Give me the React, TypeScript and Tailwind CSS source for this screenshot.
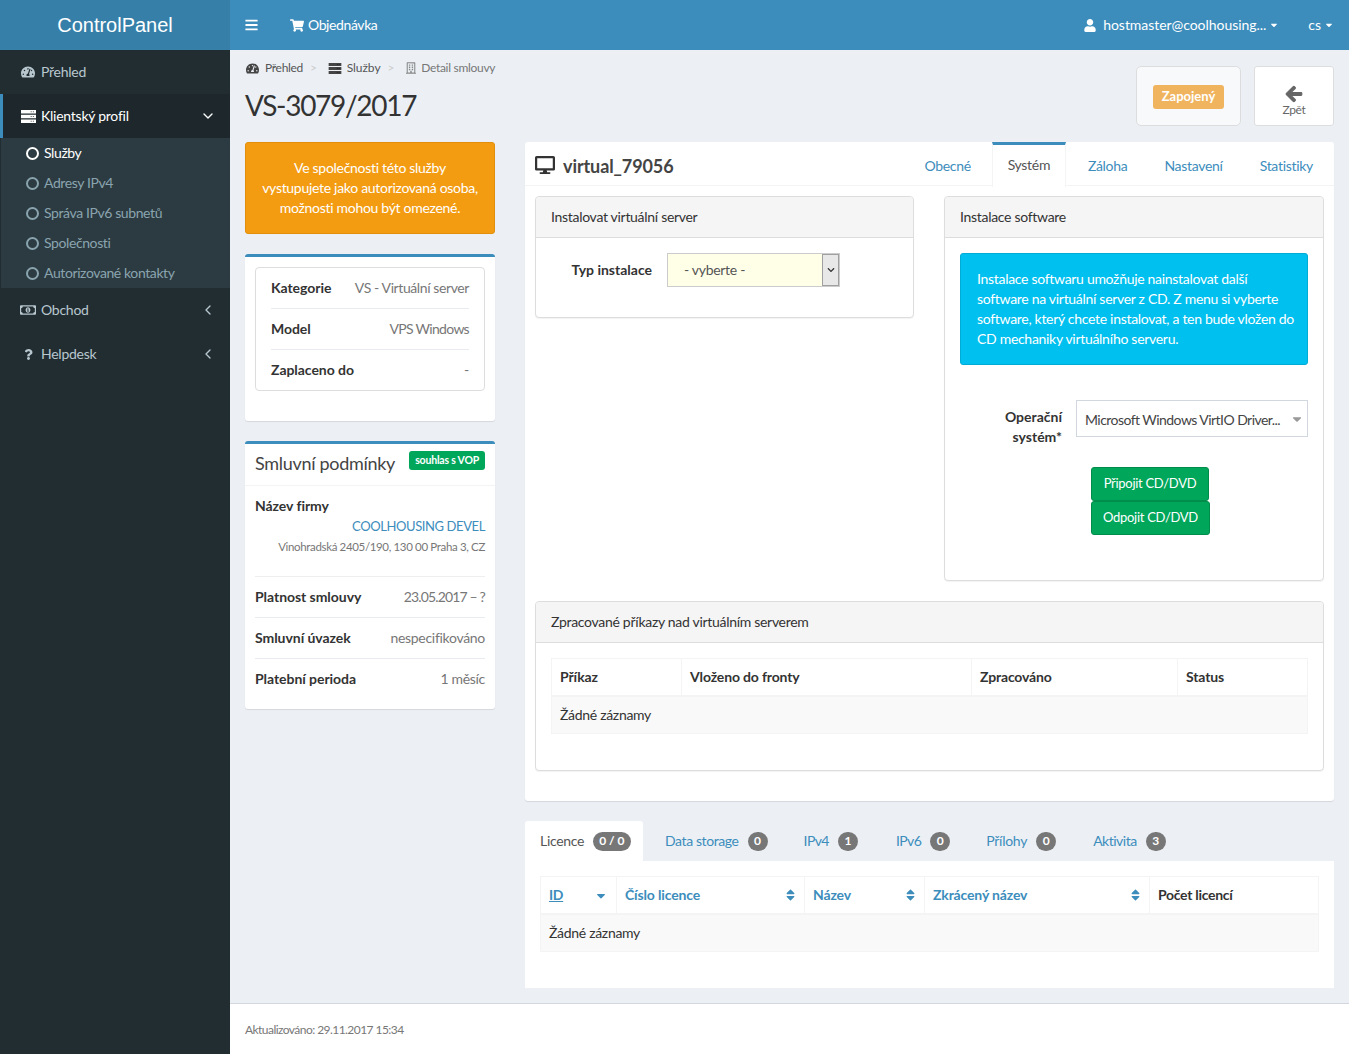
import React from "react";
import { ChevronDown, ChevronLeft } from "lucide-react";
import {
  FaTachometerAlt, FaBars, FaShoppingCart, FaUser, FaRegMoneyBillAlt, FaQuestion, FaRegBuilding, FaArrowLeft, FaDesktop, FaSort, FaSortDown, FaCaretDown, FaChevronDown,
} from "react-icons/fa";

const ServerIcon = ({ className }: { className?: string }) => (
  <svg viewBox="0 0 15 13" className={className} fill="currentColor">
    <path d="M0 0h15v3.4H0zM0 4.8h15v3.4H0zM0 9.6h15V13H0z" />
    <path d="M9.6 1.2h1.2v1H9.6zM11.8 1.2h1.2v1h-1.2zM9.6 6h1.2v1H9.6zM11.8 6h1.2v1h-1.2zM9.6 10.8h1.2v1H9.6zM11.8 10.8h1.2v1h-1.2z" fill="#000" fillOpacity="0.55" />
  </svg>
);

const Sub = ({ label, active }: { label: string; active?: boolean }) => (
  <div className={`h-[30px] flex items-center pl-[25px] gap-[5px] ${active ? "text-white" : "text-[#8aa4af]"}`}>
    <span className="w-[13px] h-[13px] shrink-0 rounded-full border-2 border-current" />
    <span className="text-[14px] tracking-[-0.4px] pb-[2px]">{label}</span>
  </div>
);

const SideItem = ({ icon, label, chevron }: { icon: React.ReactNode; label: string; chevron?: boolean }) => (
  <div className="h-[44px] flex items-center pl-[20px] pr-[14px] text-[#b8c7ce]">
    <span className="w-[16px] flex justify-center mr-[5px]">{icon}</span>
    <span className="text-[14px] tracking-[-0.25px] flex-1 pb-[2px]">{label}</span>
    {chevron && <ChevronLeft size={16} />}
  </div>
);

const Row = ({ k, v, border, vClass }: { k: string; v: string; border?: boolean; vClass?: string }) => (
  <div className={`flex items-center justify-between pb-[2px] ${border ? "h-[41px] border-t border-[#e8ebef]" : "h-[40px]"}`}>
    <span className="font-bold text-[#333] tracking-[-0.05px]">{k}</span>
    <span className={`text-[#777] ${vClass ?? ""}`}>{v}</span>
  </div>
);

const Panel = ({ title, children, className }: { title: string; children: React.ReactNode; className?: string }) => (
  <div className={`border border-[#dddddd] rounded-[4px] bg-white shadow-[0_1px_1px_rgba(0,0,0,0.05)] ${className ?? ""}`}>
    <div className="h-[41px] bg-[#f5f5f5] border-b border-[#dddddd] rounded-t-[4px] flex items-center pl-[15px] pb-[2px] text-[#333]">{title}</div>
    {children}
  </div>
);

const Badge = ({ children }: { children: React.ReactNode }) => (
  <span className="ml-[9px] inline-flex items-center justify-center min-w-[20px] h-[19px] px-[6px] rounded-full bg-[#777] text-white text-[12px] font-bold tracking-normal">{children}</span>
);

const THead = ({ label, last, sort }: { label: string; last?: boolean; sort?: React.ReactNode }) => (
  <th className={`h-[37px] px-[8px] text-left font-bold tracking-[-0.15px] border-b-2 border-[#f4f4f4] ${last ? "" : "border-r border-r-[#f4f4f4]"}`}>
    <div className="flex items-center justify-between">
      <span>{label}</span>
      {sort}
    </div>
  </th>
);

export default function App() {
  return (
    <div className="flex min-h-[1054px] bg-[#ecf0f5] text-[14px] text-[#333] tracking-[-0.3px] font-['Lato',sans-serif]">
      {/* sidebar */}
      <aside className="w-[230px] shrink-0 bg-[#222d32] flex flex-col">
        <div className="h-[50px] bg-[#367fa9] flex items-center justify-center text-white text-[20px] tracking-normal font-['Liberation_Sans',sans-serif]">ControlPanel</div>
        <SideItem icon={<FaTachometerAlt className="w-[14px] h-[14px]" />} label="Přehled" />
        <div className="h-[44px] flex items-center bg-[#1e282c] border-l-[3px] border-[#3c8dbc] pl-[18px] pr-[14px] text-white">
          <ServerIcon className="w-[15px] h-[13px] mr-[5px]" />
          <span className="text-[14px] tracking-[-0.25px] flex-1 pb-[2px]">Klientský profil</span>
          <ChevronDown size={16} />
        </div>
        <div className="bg-[#2c3b41] ml-px">
          <Sub label="Služby" active />
          <Sub label="Adresy IPv4" />
          <Sub label="Správa IPv6 subnetů" />
          <Sub label="Společnosti" />
          <Sub label="Autorizované kontakty" />
        </div>
        <SideItem icon={<FaRegMoneyBillAlt className="w-[16px] h-[16px]" />} label="Obchod" chevron />
        <SideItem icon={<FaQuestion className="w-[11px] h-[11px]" />} label="Helpdesk" chevron />
      </aside>

      {/* main */}
      <div className="flex-1 min-w-0 flex flex-col">
        <header className="h-[50px] bg-[#3c8dbc] text-white flex items-center pl-[15px] pr-[15px]">
          <FaBars className="w-[13px] h-[14px] mr-[32px]" />
          <FaShoppingCart className="w-[14px] h-[13px] mr-[4px]" />
          <span className="flex-1 tracking-[-0.4px] pb-px">Objednávka</span>
          <FaUser className="w-[12px] h-[13px] mr-[7px]" />
          <span className="tracking-[-0.05px] pb-px">hostmaster@coolhousing...</span>
          <FaCaretDown className="w-[10px] h-[10px] ml-[3px] mr-[29px]" />
          <span className="tracking-normal pb-px">cs</span>
          <FaCaretDown className="w-[10px] h-[10px] ml-[3px]" />
        </header>

        <main className="flex-1 px-[15px] pt-[10px]">
          {/* page head */}
          <div className="flex justify-between h-[82px]">
            <div>
              <div className="h-[16px] flex items-center text-[12px] text-[#666]">
                <FaTachometerAlt className="w-[13px] h-[13px] text-[#444] ml-px mr-[6px]" />
                <span className="text-[#555]">Přehled</span>
                <span className="text-[#ccc] ml-[7px] mr-[11px]">&gt;</span>
                <ServerIcon className="w-[14px] h-[11px] text-[#444] mr-[5px]" />
                <span className="text-[#555] tracking-[-0.05px]">Služby</span>
                <span className="text-[#ccc] ml-[7px] mr-[12px]">&gt;</span>
                <FaRegBuilding className="w-[10px] h-[12px] text-[#888] mr-[5px]" />
                <span className="text-[#777]">Detail smlouvy</span>
              </div>
              <h1 className="text-[28px] leading-[36px] mt-[11px] text-[#333] tracking-[-1.3px]">VS-3079/2017</h1>
            </div>
            <div className="flex gap-[13px] mt-[6px] h-[60px]">
              <div className="w-[105px] bg-[#f8f9fb] border border-[#dddddd] rounded-[5px] flex items-center justify-center">
                <span className="bg-[#f0ad4e] opacity-90 text-white font-bold text-[13px] tracking-normal h-[24px] w-[71px] mt-[2px] rounded-[3px] flex items-center justify-center">Zapojený</span>
              </div>
              <div className="w-[80px] bg-white border border-[#dddddd] rounded-[3px] flex flex-col items-center justify-center text-[#666]">
                <FaArrowLeft className="w-[18px] h-[18px] text-[#666] mt-[8px]" stroke="currentColor" strokeWidth={30} />
                <span className="text-[12px] leading-[13px]">Zpět</span>
              </div>
            </div>
          </div>

          <div className="flex gap-[30px] items-start">
            {/* left column */}
            <div className="w-[250px] shrink-0 flex flex-col">
              <div className="h-[92px] bg-[#f39c12] border border-[#e08e0b] rounded-[3px] text-white text-center flex items-center justify-center leading-[20px]">
                <p>Ve společnosti této služby<br />vystupujete jako autorizovaná osoba,<br />možnosti mohou být omezené.</p>
              </div>

              <div className="mt-[20px] h-[167px] bg-white border-t-[3px] border-[#3c8dbc] rounded-[3px] shadow-[0_1px_1px_rgba(0,0,0,0.1)] px-[10px] pt-[10px]">
                <div className="border border-[#dddddd] rounded-[4px] px-[15px]">
                  <Row k="Kategorie" v="VS - Virtuální server" vClass="tracking-[-0.4px]" />
                  <Row k="Model" v="VPS Windows" border vClass="tracking-[-0.7px]" />
                  <Row k="Zaplaceno do" v="-" border />
                </div>
              </div>

              <div className="mt-[20px] h-[268px] bg-white border-t-[3px] border-[#3c8dbc] rounded-[3px] shadow-[0_1px_1px_rgba(0,0,0,0.1)]">
                <div className="h-[42px] border-b border-[#f4f4f4] px-[10px] flex items-start justify-between">
                  <span className="text-[18px] leading-[20px] mt-[9px] text-[#444]">Smluvní podmínky</span>
                  <span className="mt-[7px] h-[19px] px-[6px] bg-[#00a65a] text-white text-[10.5px] tracking-[-0.2px] font-bold rounded-[3px] flex items-center">souhlas s VOP</span>
                </div>
                <div className="px-[10px]">
                  <div className="font-bold mt-[10px] leading-[20px] tracking-[-0.05px]">Název firmy</div>
                  <div className="text-right text-[#3c8dbc] leading-[20px] text-[13px] tracking-[-0.4px]">COOLHOUSING DEVEL</div>
                  <div className="text-right text-[#777] text-[11.5px] tracking-[-0.35px] leading-[20px] mt-[1px]">Vinohradská 2405/190, 130 00 Praha 3, CZ</div>
                  <div className="mt-[19px] border-t border-[#eeeeee]">
                    <Row k="Platnost smlouvy" v="23.05.2017 – ?" vClass="tracking-[-0.85px]" />
                    <Row k="Smluvní úvazek" v="nespecifikováno" border />
                    <Row k="Platební perioda" v="1 měsíc" border />
                  </div>
                </div>
              </div>
            </div>

            {/* right column */}
            <div className="flex-1 min-w-0 flex flex-col">
              <div className="h-[659px] bg-white rounded-[3px] shadow-[0_1px_1px_rgba(0,0,0,0.1)]">
                <div className="h-[44px] border-b border-[#f4f4f4] flex items-start pl-[10px]">
                  <FaDesktop className="w-[20px] h-[18px] text-[#333] mt-[14px] mr-[8px]" />
                  <span className="text-[18px] font-bold text-[#444] mt-[12px] leading-[24px] tracking-[-0.1px]">virtual_79056</span>
                  <div className="ml-auto flex h-[45px] text-[#3c8dbc]">
                    <span className="pt-[13px] mr-[21px]">Obecné</span>
                    <span className="w-[74px] h-[45px] bg-white border-t-[3px] border-[#3c8dbc] border-r border-r-[#f4f4f4] border-l border-l-[#f4f4f4] text-[#555] text-center pt-[9px]">Systém</span>
                    <span className="pt-[13px] ml-[22px]">Záloha</span>
                    <span className="pt-[13px] ml-[37px]">Nastavení</span>
                    <span className="pt-[13px] ml-[37px] mr-[21px]">Statistiky</span>
                  </div>
                </div>
                <div className="px-[10px] pt-[10px]">
                  <div className="flex justify-between items-start">
                    <Panel title="Instalovat virtuální server" className="w-[379px] h-[122px]">
                      <div className="flex items-center pt-[15px]">
                        <span className="w-[116px] text-right font-bold tracking-normal pb-[2px]">Typ instalace</span>
                        <div className="ml-[15px] w-[173px] h-[34px] border border-[#ccc] bg-[#ffffe8] flex items-center justify-between">
                          <span className="pl-[16px] pb-[2px] text-[#555]">- vyberte -</span>
                          <span className="w-[17px] h-full bg-[#e8e8e8] border border-[#a0a0a0] flex items-center justify-center">
                            <FaChevronDown className="w-[8px] h-[8px] text-[#333]" />
                          </span>
                        </div>
                      </div>
                    </Panel>
                    <Panel title="Instalace software" className="w-[380px] h-[385px]">
                      <div className="mx-[15px] mt-[15px] h-[112px] bg-[#00c0ef] text-white rounded-[3px] border border-[#00acd6] pl-[16px] pr-[8px] py-[15px] leading-[20px]">
                        Instalace softwaru umožňuje nainstalovat další<br />software na virtuální server z CD. Z menu si vyberte<br />software, který chcete instalovat, a ten bude vložen do<br />CD mechaniky virtuálního serveru.
                      </div>
                      <div className="flex mt-[35px]">
                        <span className="w-[117px] text-right font-bold tracking-normal leading-[20px] pt-[7px] pl-[45px]">Operační systém*</span>
                        <div className="ml-[14px] w-[232px] h-[37px] border border-[#d2d6de] flex items-center pl-[8px] pr-[3px] pt-[1px] text-[#444]">
                          <span className="flex-1 whitespace-nowrap tracking-[-0.55px]">Microsoft Windows VirtIO Driver...</span>
                          <FaCaretDown className="w-[14px] h-[14px] text-[#999]" />
                        </div>
                      </div>
                      <div className="ml-[146px] mt-[20px] flex flex-col items-start">
                        <button className="w-[118px] h-[34px] bg-[#00a65a] border border-[#008d4c] rounded-[3px] text-white text-[13px] pb-[1px]">Připojit CD/DVD</button>
                        <button className="w-[119px] h-[34px] bg-[#00a65a] border border-[#008d4c] rounded-[3px] text-white text-[13px] pb-[1px]">Odpojit CD/DVD</button>
                      </div>
                    </Panel>
                  </div>

                  <Panel title="Zpracované příkazy nad virtuálním serverem" className="mt-[20px] h-[170px]">
                    <div className="px-[15px] pt-[15px]">
                      <table className="w-full border-collapse border border-[#f4f4f4] table-fixed">
                        <colgroup>
                          <col className="w-[130px]" /><col className="w-[290px]" /><col className="w-[206px]" /><col />
                        </colgroup>
                        <thead>
                          <tr><THead label="Příkaz" /><THead label="Vloženo do fronty" /><THead label="Zpracováno" /><THead label="Status" last /></tr>
                        </thead>
                        <tbody>
                          <tr><td colSpan={4} className="h-[38px] px-[8px] bg-[#f9f9f9]">Žádné záznamy</td></tr>
                        </tbody>
                      </table>
                    </div>
                  </Panel>
                </div>
              </div>

              {/* bottom tabs */}
              <div className="mt-[20px] h-[40px] flex items-stretch">
                <div className="w-[118px] bg-white rounded-t-[3px] flex items-center pl-[15px] text-[#555]"><span className="pb-[2px]">Licence</span><Badge>0 / 0</Badge></div>
                <div className="flex items-center text-[#3c8dbc] pl-[22px]"><span className="pb-[2px] tracking-[-0.4px]">Data storage</span><Badge>0</Badge></div>
                <div className="flex items-center text-[#3c8dbc] pl-[36px]"><span className="pb-[2px] tracking-[-0.6px]">IPv4</span><Badge>1</Badge></div>
                <div className="flex items-center text-[#3c8dbc] pl-[38px]"><span className="pb-[2px] tracking-[-0.6px]">IPv6</span><Badge>0</Badge></div>
                <div className="flex items-center text-[#3c8dbc] pl-[36px]"><span className="pb-[2px]">Přílohy</span><Badge>0</Badge></div>
                <div className="flex items-center text-[#3c8dbc] pl-[37px]"><span className="pb-[2px] tracking-[-0.5px]">Aktivita</span><Badge>3</Badge></div>
              </div>
              <div className="h-[127px] bg-white px-[15px] pt-[15px]">
                <table className="w-full border-collapse border border-[#f4f4f4] table-fixed">
                  <colgroup>
                    <col className="w-[76px]" /><col className="w-[188px]" /><col className="w-[120px]" /><col className="w-[225px]" /><col />
                  </colgroup>
                  <thead>
                    <tr className="text-[#3c8dbc]">
                      <th className="h-[37px] px-[8px] text-left font-bold border-b-2 border-[#f4f4f4] border-r border-r-[#f4f4f4]">
                        <div className="flex items-center justify-between"><span className="underline">ID</span><FaSortDown className="w-[14px] h-[14px] -mt-[4px]" /></div>
                      </th>
                      <THead label="Číslo licence" sort={<FaSort className="w-[11px] h-[14px]" />} />
                      <THead label="Název" sort={<FaSort className="w-[11px] h-[14px]" />} />
                      <THead label="Zkrácený název" sort={<FaSort className="w-[11px] h-[14px]" />} />
                      <th className="h-[37px] px-[8px] text-left font-bold text-[#333] border-b-2 border-[#f4f4f4]">Počet licencí</th>
                    </tr>
                  </thead>
                  <tbody>
                    <tr><td colSpan={5} className="h-[38px] px-[8px] bg-[#f9f9f9]">Žádné záznamy</td></tr>
                  </tbody>
                </table>
              </div>
            </div>
          </div>
        </main>

        <footer className="h-[51px] mt-[15px] bg-white border-t border-[#d2d6de] flex items-center pl-[15px] pt-[2px] text-[12px] tracking-[-0.55px] text-[#777]">
          Aktualizováno: 29.11.2017 15:34
        </footer>
      </div>
    </div>
  );
}
